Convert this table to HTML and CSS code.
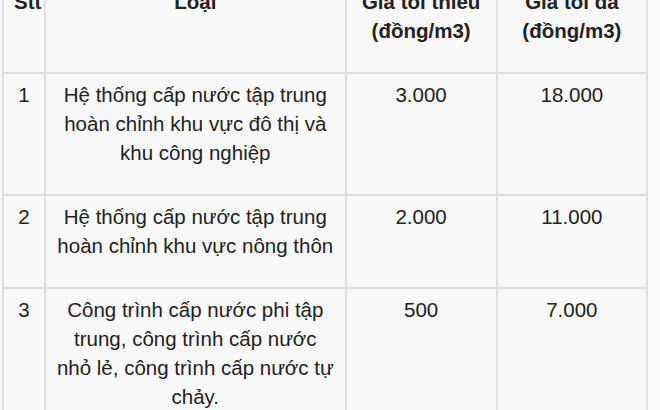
FILE: index.html
```html
<!DOCTYPE html>
<html lang="vi">
<head>
<meta charset="utf-8">
<link rel="stylesheet" href="styles.css">
</head>
<body>
<div class="wrap">
<table class="price">
<colgroup>
<col class="c-stt"><col class="c-type"><col class="c-min"><col class="c-max">
</colgroup>
<thead>
<tr>
<th>Stt</th>
<th>Loại</th>
<th>Giá tối thiểu (đồng/m3)</th>
<th>Giá tối đa (đồng/m3)</th>
</tr>
</thead>
<tbody>
<tr>
<td>1</td>
<td>Hệ thống cấp nước tập trung hoàn chỉnh khu vực đô thị và khu công nghiệp</td>
<td>3.000</td>
<td>18.000</td>
</tr>
<tr>
<td>2</td>
<td>Hệ thống cấp nước tập trung hoàn chỉnh khu vực nông thôn</td>
<td>2.000</td>
<td>11.000</td>
</tr>
<tr>
<td>3</td>
<td>Công trình cấp nước phi tập trung, công trình cấp nước nhỏ lẻ, công trình cấp nước tự chảy.</td>
<td>500</td>
<td>7.000</td>
</tr>
</tbody>
</table>
</div>
</body>
</html>
```
FILE: styles.css
```css
html, body {
  margin: 0;
  padding: 0;
  background: #fafafa;
}
body {
  font-family: "Liberation Sans", Arial, sans-serif;
  color: #222;
  overflow: hidden;
}
.wrap {
  margin-top: -21px;
  padding-left: 2px;
}
.price {
  border-collapse: collapse;
  table-layout: fixed;
  width: 646px;
  background: #f8f8f8;
}
.c-stt { width: 42px; }
.c-type { width: 300px; }
.c-min { width: 151px; }
.c-max { width: 150px; }
.price th,
.price td {
  border: 2px solid #dedede;
  padding: 6px 10px 27px;
  font-size: 20.5px;
  line-height: 29px;
  text-align: center;
  vertical-align: top;
}
.price th {
  font-weight: bold;
}
.price td {
  font-weight: normal;
}
```
